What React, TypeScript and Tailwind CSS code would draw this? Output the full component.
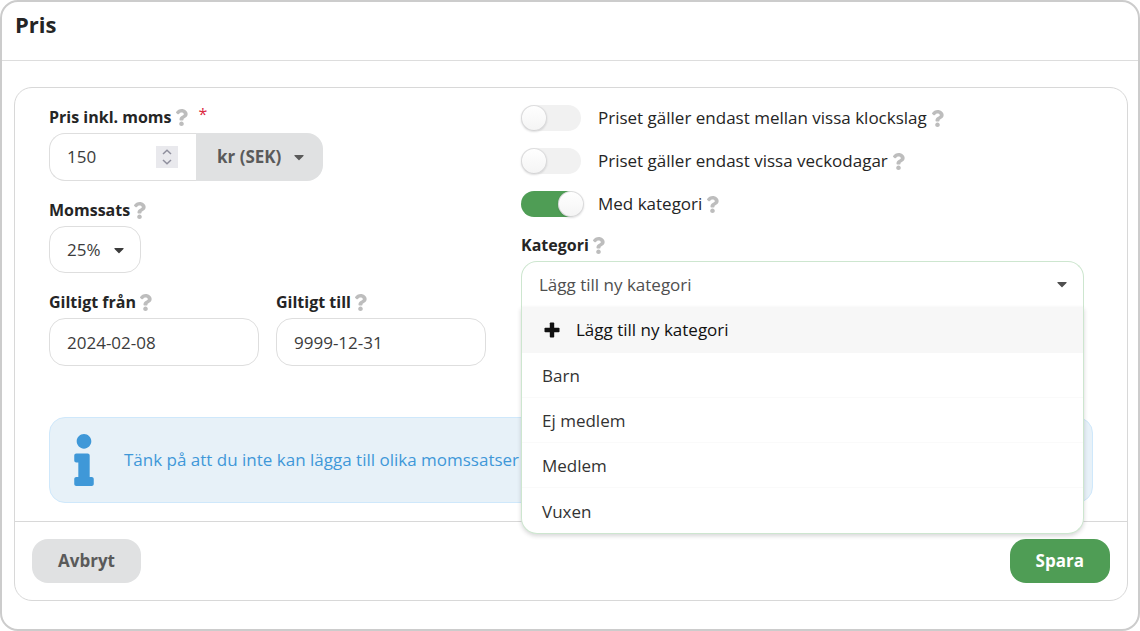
import { useState } from 'react'
import type { ReactNode } from 'react'
import { FaCaretDown, FaInfo, FaQuestion } from 'react-icons/fa'

const categories = ['Barn', 'Ej medlem', 'Medlem', 'Vuxen']
const newCategory = 'Lägg till ny kategori'

function Help() {
  return <FaQuestion className="h-[17px] w-[13px] shrink-0 text-[#bdbdbd]" aria-hidden="true" />
}

function PlusIcon() {
  return (
    <svg viewBox="0 0 16 16" className="mr-4 h-4 w-4" fill="currentColor" aria-hidden="true">
      <rect x="0.5" y="5.8" width="15" height="4.4" rx="0.8" />
      <rect x="5.8" y="0.5" width="4.4" height="15" rx="0.8" />
    </svg>
  )
}

function Chevron({ up }: { up?: boolean }) {
  return (
    <svg viewBox="0 0 10 6" className="h-[6px] w-[10px]" fill="none" stroke="currentColor" strokeWidth="1.5" aria-hidden="true">
      <path d={up ? 'M1 5L5 1.2L9 5' : 'M1 1L5 4.8L9 1'} />
    </svg>
  )
}

function Caret({ className }: { className: string }) {
  return <FaCaretDown className={`pointer-events-none absolute top-1/2 h-4 w-4 -translate-y-1/2 ${className}`} aria-hidden="true" />
}

function FieldLabel({ htmlFor, required, children }: { htmlFor: string; required?: boolean; children: ReactNode }) {
  return (
    <label htmlFor={htmlFor} className="mb-[5px] flex h-[22px] items-center gap-[3px] text-[16px] font-bold">
      {children}
      <Help />
      {required && <span className="ml-2 self-start leading-4 font-normal text-[#db2840]">*</span>}
    </label>
  )
}

function Toggle({ id, label, defaultChecked }: { id: string; label: string; defaultChecked?: boolean }) {
  return (
    <div className="flex h-6 items-center">
      <input
        id={id}
        type="checkbox"
        role="switch"
        defaultChecked={defaultChecked}
        className="h-[26px] w-[60px] shrink-0 cursor-pointer appearance-none rounded-full bg-[#f1f1f1] transition-colors before:block before:h-[26px] before:w-[26px] before:rounded-full before:bg-linear-to-b before:from-white before:to-[#f4f4f4] before:shadow-[0_1px_2px_rgba(34,36,38,0.15),inset_0_0_0_1px_rgba(34,36,38,0.15)] checked:bg-[#4f9d55] checked:before:translate-x-[37px]"
      />
      <label htmlFor={id} className="ml-[17px] flex items-center gap-1 text-[17px]">
        {label}
        <Help />
      </label>
    </div>
  )
}

function DateField({ id, label, value }: { id: string; label: string; value: string }) {
  return (
    <div>
      <FieldLabel htmlFor={id}>{label}</FieldLabel>
      <input
        id={id}
        type="text"
        defaultValue={value}
        className="h-12 w-full rounded-2xl border border-[#dedede] px-[17px] text-[17px] text-[#3c3c3c] outline-none"
      />
    </div>
  )
}

function PriceField() {
  const [price, setPrice] = useState(150)

  return (
    <div>
      <FieldLabel htmlFor="price" required>Pris inkl. moms</FieldLabel>
      <div className="flex h-12">
        <div className="flex w-[147px] items-center rounded-l-2xl border border-r-0 border-[#dedede] pr-[18px]">
          <input
            id="price"
            type="number"
            value={price}
            onChange={(e) => setPrice(Number(e.target.value))}
            className="min-w-0 flex-1 appearance-none pl-[17px] text-[17px] text-[#3c3c3c] outline-none [-moz-appearance:textfield] [&::-webkit-inner-spin-button]:appearance-none"
          />
          <div className="flex h-[22px] w-[22px] flex-col items-center justify-center gap-1 bg-[#e9e9ed] text-[#8f8f9d]">
            <button type="button" aria-label="Öka" onClick={() => setPrice(price + 1)}>
              <Chevron up />
            </button>
            <button type="button" aria-label="Minska" onClick={() => setPrice(price - 1)}>
              <Chevron />
            </button>
          </div>
        </div>
        <div className="relative w-[127px] text-[#5a5a5a]">
          <select
            aria-label="Valuta"
            className="h-full w-full appearance-none rounded-r-2xl bg-[#e0e1e2] pl-[21px] text-[17px] font-bold outline-none"
          >
            <option>kr (SEK)</option>
          </select>
          <Caret className="right-4" />
        </div>
      </div>
    </div>
  )
}

function CategoryField() {
  const [open, setOpen] = useState(true)
  const [value, setValue] = useState(newCategory)

  const pick = (name: string) => {
    setValue(name)
    setOpen(false)
  }

  return (
    <div>
      <FieldLabel htmlFor="category">Kategori</FieldLabel>
      <div className="relative">
        <select
          id="category"
          value={value}
          onChange={(e) => setValue(e.target.value)}
          onMouseDown={(e) => {
            e.preventDefault()
            setOpen(!open)
          }}
          className={`block h-[46px] w-full appearance-none border border-[#cde6cf] px-[17px] text-[17px] text-[#4f4f4f] outline-none ${
            open ? 'rounded-t-2xl border-b-0' : 'rounded-2xl'
          }`}
        >
          {[newCategory, ...categories].map((name) => (
            <option key={name}>{name}</option>
          ))}
        </select>
        <Caret className="right-[14px] text-[#4f4f4f]" />

        {open && (
          <ul
            role="listbox"
            aria-label="Kategori"
            className="absolute inset-x-0 top-full z-10 overflow-hidden rounded-b-2xl border border-t-0 border-[#cde6cf] bg-white text-[17px] shadow-[0_2px_4px_rgba(34,36,38,0.18)]"
          >
            <li
              role="option"
              aria-selected={value === newCategory}
              onClick={() => pick(newCategory)}
              className="flex h-[46px] cursor-pointer items-center bg-[#f7f7f7] pl-[22px] text-[#111111]"
            >
              <PlusIcon />
              {newCategory}
            </li>
            {categories.map((name) => (
              <li
                key={name}
                role="option"
                aria-selected={value === name}
                onClick={() => pick(name)}
                className="flex h-[45px] cursor-pointer items-center border-b border-[#fafafa] px-5 pt-[2px] text-[#333333] last:border-b-0 hover:bg-[#f7f7f7]"
              >
                {name}
              </li>
            ))}
          </ul>
        )}
      </div>
    </div>
  )
}

export default function App() {
  return (
    <main className="rounded-[18px] border-2 border-[#cccccc] bg-white font-['Open_Sans',sans-serif] text-[#252525]">
      <header className="flex h-[59px] items-center border-b border-[#dddddd] px-[13px] pb-[14px]">
        <h1 className="text-[22px] font-bold">Pris</h1>
      </header>

      <form
        className="mt-[26px] mr-[10px] mb-7 ml-3 rounded-[18px] border border-[#d8d8d8]"
        onSubmit={(e) => e.preventDefault()}
      >
        <div className="px-[34px] py-[18px]">
          <div className="grid grid-cols-[472fr_572fr]">
            <div className="flex flex-col gap-[18px] pr-[35px]">
              <PriceField />
              <div>
                <FieldLabel htmlFor="vat">Momssats</FieldLabel>
                <div className="relative w-[92px]">
                  <select
                    id="vat"
                    className="block h-[47px] w-full appearance-none rounded-2xl border border-[#dedede] pl-[17px] text-[17px] text-[#3c3c3c] outline-none"
                  >
                    <option>25%</option>
                    <option>12%</option>
                    <option>6%</option>
                  </select>
                  <Caret className="right-[14px] text-[#3c3c3c]" />
                </div>
              </div>
              <div className="grid grid-cols-2 gap-[17px]">
                <DateField id="valid-from" label="Giltigt från" value="2024-02-08" />
                <DateField id="valid-to" label="Giltigt till" value="9999-12-31" />
              </div>
            </div>

            <div className="flex flex-col gap-[18px] pr-[9px]">
              <div className="flex flex-col gap-[19px]">
                <Toggle id="hours" label="Priset gäller endast mellan vissa klockslag" />
                <Toggle id="weekdays" label="Priset gäller endast vissa veckodagar" />
                <Toggle id="with-category" label="Med kategori" defaultChecked />
              </div>
              <CategoryField />
            </div>
          </div>

          <div className="mt-[51px] flex h-[86px] items-center rounded-2xl border border-[#cfe8fb] bg-[#e7f1f8] pl-6 text-[17px] text-[#3f98d8]">
            <FaInfo className="mr-[30px] h-[52px] w-5" aria-hidden="true" />
            <p>Tänk på att du inte kan lägga till olika momssatser</p>
          </div>
        </div>

        <footer className="flex items-center justify-between border-t border-[#d8d8d8] px-[17px] py-[17px]">
          <button type="button" className="h-11 rounded-2xl bg-[#e0e1e2] px-[26px] text-[17px] font-bold text-[#5a5a5a]">
            Avbryt
          </button>
          <button type="submit" className="h-11 rounded-2xl bg-[#4f9d55] px-[26px] text-[17px] font-bold text-white">
            Spara
          </button>
        </footer>
      </form>
    </main>
  )
}
